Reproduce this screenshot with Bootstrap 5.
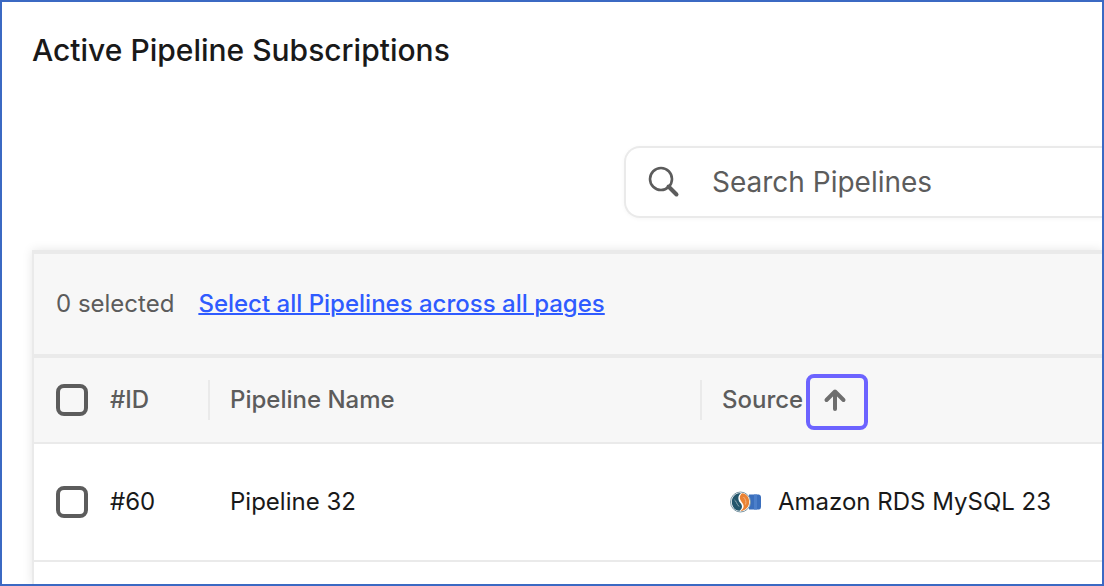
<!DOCTYPE html>
<html lang="en">
<head>
<meta charset="utf-8">
<meta name="viewport" content="width=device-width, initial-scale=1">
<title>Active Pipeline Subscriptions</title>
<link href="https://cdn.jsdelivr.net/npm/bootstrap@5.3.0/dist/css/bootstrap.min.css" rel="stylesheet">
<style>
  :root { --line: #eaeaea; --panel: #f7f7f7; --muted-ink: #5c5c5c; --ink: #191919; }
  body { font-family: Inter, "Liberation Sans", sans-serif; font-size: 24px; line-height: 32px; color: var(--ink); background: #fff; }
  .frame { height: 100vh; border: 2px solid #3b69c3; }
  .page-title { font-size: 30px; line-height: 40px; font-weight: 500; padding: 28px 30px 0; margin-bottom: 76px; }
  .search-box { width: 478px; max-width: 100%; height: 72px; border: 2px solid var(--line); border-right: 0; border-radius: 16px 0 0 16px; padding-left: 20px; box-shadow: 0 1px 4px rgba(0,0,0,.04); }
  .search-box svg { width: 36px; height: 36px; flex: none; color: var(--muted-ink); }
  .search-box input { font-size: 28px; line-height: 36px; padding: 0; margin-left: 30px; color: var(--ink); }
  .search-box input::placeholder { color: var(--muted-ink); opacity: 1; }
  .listing { margin: 32px 0 0 30px; border-left: 2px solid var(--line); border-top: 4px solid var(--line); box-shadow: 0 0 10px rgba(0,0,0,.1); }
  .selection-bar { height: 104px; padding: 0 22px; gap: 24px; background: var(--panel); border-bottom: 4px solid var(--line); color: var(--muted-ink); }
  .selection-bar a { color: #2f5bff; font-weight: 500; text-decoration-thickness: 2px; }
  .pipelines { table-layout: fixed; border-collapse: separate; border-spacing: 0; width: 100%; }
  .pipelines th, .pipelines td { padding: 0 0 0 20px; border-bottom: 2px solid var(--line); vertical-align: middle; white-space: nowrap; }
  .pipelines th:first-child, .pipelines td:first-child { padding-left: 22px; }
  .pipelines th { height: 86px; background: var(--panel); color: var(--muted-ink); font-weight: 500; }
  .pipelines td { height: 118px; }
  .split { position: relative; }
  .split::after { content: ""; position: absolute; right: 0; top: 22px; width: 2px; height: 40px; background: var(--line); }
  .col-id { width: 176px; }
  .col-name { width: 492px; }
  .pick { gap: 22px; }
  .pick .form-check-input { width: 32px; height: 32px; margin: 0; border: 4px solid var(--muted-ink); border-radius: 8px; background-color: #fff; flex: none; }
  .pipelines thead .form-check-input:not(:checked) { background-color: var(--panel); }
  .sort-btn { width: 62px; height: 56px; margin: 4px 0 0 3px; border: 4px solid #6c63ff; border-radius: 8px; background: var(--panel); color: #6e6e6e; }
  .sort-btn svg { width: 24px; height: 24px; margin: 0 4px 4px 0; }
  .source { padding-left: 8px; gap: 16px; }
  .source svg { width: 32px; height: 24px; flex: none; }
</style>
</head>
<body>
<main class="frame d-flex flex-column overflow-hidden">
  <h1 class="page-title">Active Pipeline Subscriptions</h1>

  <div class="search-box d-flex align-items-center ms-auto bg-white flex-shrink-0">
    <svg viewBox="0 0 36 36" fill="none" stroke="currentColor" aria-hidden="true">
      <circle cx="15" cy="15" r="11" stroke-width="2.600"/>
      <path d="M22.500 22.500 30.500 30.500" stroke-width="4" stroke-linecap="round"/>
    </svg>
    <input type="search" class="form-control border-0 shadow-none bg-transparent" placeholder="Search Pipelines" aria-label="Search Pipelines">
  </div>

  <section class="listing bg-white flex-grow-1">
    <div class="selection-bar d-flex align-items-center">
      <span>0 selected</span>
      <a href="#">Select all Pipelines across all pages</a>
    </div>
    <table class="pipelines">
      <colgroup><col class="col-id"><col class="col-name"><col></colgroup>
      <thead>
        <tr>
          <th class="split" scope="col">
            <div class="pick d-flex align-items-center">
              <input class="form-check-input" type="checkbox" id="pick-all">
              <label for="pick-all">#ID</label>
            </div>
          </th>
          <th class="split" scope="col">Pipeline Name</th>
          <th scope="col">
            <div class="d-flex align-items-center">
              <span>Source</span>
              <button type="button" class="sort-btn d-flex align-items-center justify-content-center p-0" aria-label="Sort by source">
                <svg viewBox="0 0 24 24" fill="none" stroke="currentColor" stroke-width="4" stroke-linecap="round" stroke-linejoin="round" aria-hidden="true">
                  <path d="M12 21V3.500M3.500 12 12 3.500 20.500 12"/>
                </svg>
              </button>
            </div>
          </th>
        </tr>
      </thead>
      <tbody>
        <tr>
          <td>
            <div class="pick d-flex align-items-center">
              <input class="form-check-input" type="checkbox" id="pick-60">
              <label for="pick-60">#60</label>
            </div>
          </td>
          <td>Pipeline 32</td>
          <td>
            <div class="source d-flex align-items-center">
              <svg viewBox="0 0 32 24" aria-hidden="true">
                <path d="M19 4.500H29Q31 5 31 7V17Q31 19 29 19.500H19Z" fill="#3b6fbd"/>
                <path d="M24 4.500h3v15h-3z" fill="#4c7fca"/>
                <circle cx="10.500" cy="12" r="10" fill="#fff" stroke="#7d98a5" stroke-width="1"/>
                <path d="M11 3C5.500 2.800 1.800 7 1.800 12S5.500 21 9.500 20.800C11.500 19.500 13.200 16.500 10.800 13.500 7.500 10 7.500 6 11 3Z" fill="#24566c"/>
                <path d="M12 3.200C16.500 3.600 19.200 7.200 19.200 12S15.500 20.900 10.500 20.900C14 18.500 14.600 15.500 12 12.400 9 9 9 6 12 3.200Z" fill="#ea8234"/>
                <path d="M4.500 10C6 10.500 6.500 14 9 16.500" fill="none" stroke="#8fa9b3" stroke-width="1"/>
                <path d="M13.500 7C15.500 9 16.500 12 15.500 14.500" fill="none" stroke="#f4b583" stroke-width="1"/>
              </svg>
              <span>Amazon RDS MySQL 23</span>
            </div>
          </td>
        </tr>
      </tbody>
    </table>
  </section>
</main>
<script src="https://cdn.jsdelivr.net/npm/bootstrap@5.3.0/dist/js/bootstrap.bundle.min.js"></script>
</body>
</html>
